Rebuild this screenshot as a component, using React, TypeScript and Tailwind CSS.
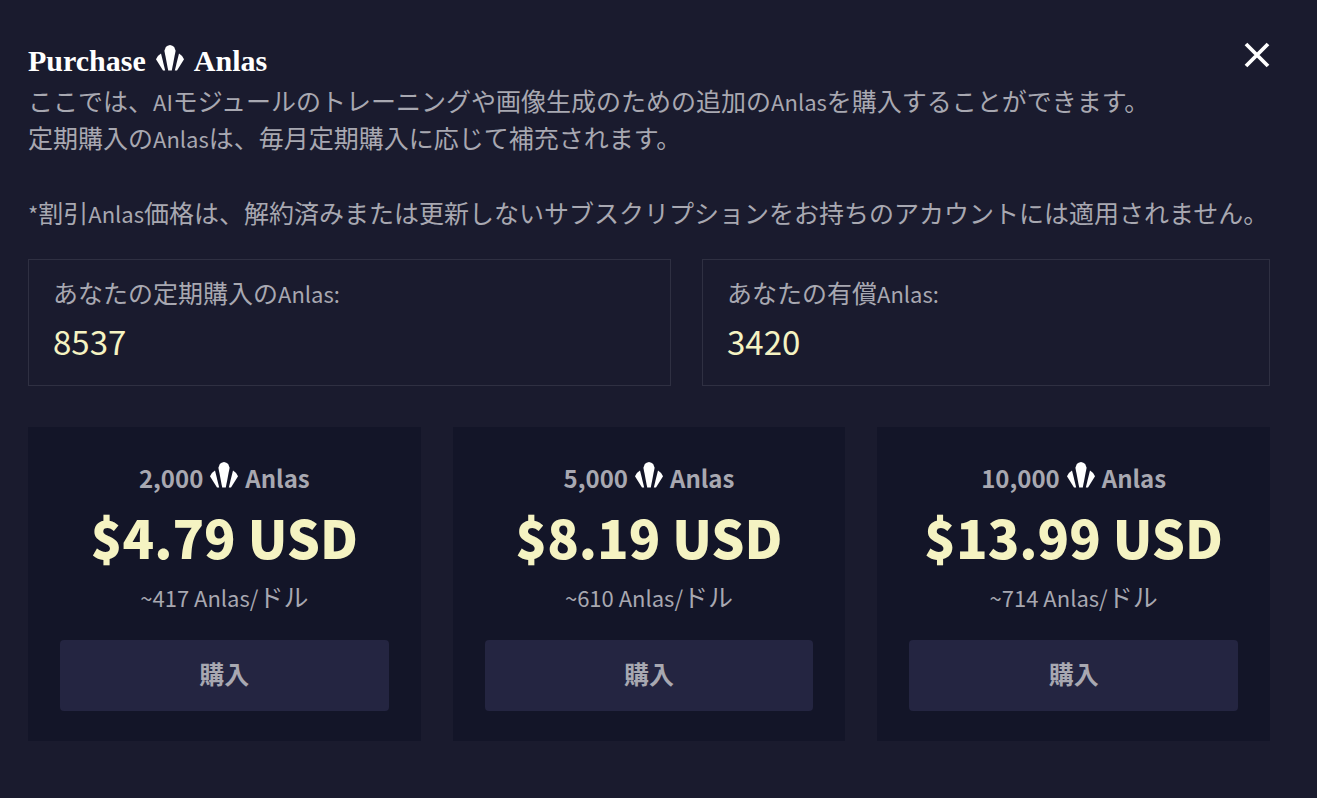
import type { ReactNode } from "react";

function AnlasIcon() {
  return (
    <svg
      aria-hidden="true"
      viewBox="0 0 28 26"
      className="mb-[6px] h-[26px] w-7 shrink-0 fill-white"
    >
      <path d="M14 0Q16.6.6 18.2 2L19.6 5.8 15.8 25.4H12.2L8.4 5.8 9.8 2Q11.4.6 14 0Z" />
      <path d="M5 8.4 9.2 25.4H7L0 14.2Q1.2 10.6 5 8.4Z" />
      <path d="M23 8.4 18.8 25.4H21L28 14.2Q26.8 10.6 23 8.4Z" />
    </svg>
  );
}

function Latin({ children }: { children: ReactNode }) {
  return <span className="text-[22px] leading-none">{children}</span>;
}

function Balance({ label, amount }: { label: string; amount: number }) {
  return (
    <div className="flex-auto border border-[#2f3042] px-6 pt-[14px] pb-[18px]">
      <dt className="leading-[37px]">
        {label}
        <Latin>Anlas:</Latin>
      </dt>
      <dd className="mt-1 text-[33px] leading-[52px] text-[#f5f3c2]">{amount}</dd>
    </div>
  );
}

const packs = [
  { amount: "2,000", price: "$4.79 USD", rate: "~417 Anlas/" },
  { amount: "5,000", price: "$8.19 USD", rate: "~610 Anlas/" },
  { amount: "10,000", price: "$13.99 USD", rate: "~714 Anlas/" },
];

export default function App() {
  return (
    <main
      lang="ja"
      className="min-h-screen bg-[#1a1b2e] pt-9 pr-[47px] pb-14 pl-7 font-['Noto_Sans_CJK_JP',sans-serif] text-[25px] text-[#a8a8b1]"
    >
      <header className="flex items-start justify-between">
        <h1 className="flex items-center gap-[10px] pt-1 font-['Liberation_Serif',serif] text-[30px] leading-[42px] font-bold text-white">
          Purchase
          <AnlasIcon />
          Anlas
        </h1>
        <button type="button" aria-label="閉じる" className="mt-[6px]">
          <svg viewBox="0 0 26 26" className="size-[26px] stroke-white stroke-[3.8]">
            <path d="M2 2 24 24M24 2 2 24" />
          </svg>
        </button>
      </header>

      <p className="leading-[37px]">
        ここでは、<Latin>AI</Latin>モジュールのトレーニングや画像生成のための追加の
        <Latin>Anlas</Latin>を購入することができます。
        <br />
        定期購入の<Latin>Anlas</Latin>は、毎月定期購入に応じて補充されます。
      </p>
      <p className="mt-[38px] leading-[37px]">
        <Latin>*</Latin>割引<Latin>Anlas</Latin>
        価格は、解約済みまたは更新しないサブスクリプションをお持ちのアカウントには適用されません。
      </p>

      <dl className="mt-7 flex flex-wrap gap-[31px]">
        <Balance label="あなたの定期購入の" amount={8537} />
        <Balance label="あなたの有償" amount={3420} />
      </dl>

      <div className="mt-[41px] grid grid-cols-3 gap-8">
        {packs.map((pack) => (
          <section
            key={pack.amount}
            className="flex flex-col items-center bg-[#131528] px-8 pt-8 pb-[30px]"
          >
            <h2 className="flex items-center gap-[7px] text-2xl leading-[37px] font-bold">
              {pack.amount}
              <AnlasIcon />
              Anlas
            </h2>
            <p className="text-[52px] leading-[82px] font-black whitespace-nowrap text-[#f5f3c2]">
              {pack.price}
            </p>
            <p className="leading-[37px]">
              <Latin>{pack.rate}</Latin>ドル
            </p>
            <button
              type="button"
              className="mt-[25px] h-[71px] w-full rounded bg-[#242541] pb-1 font-bold"
            >
              購入
            </button>
          </section>
        ))}
      </div>
    </main>
  );
}
